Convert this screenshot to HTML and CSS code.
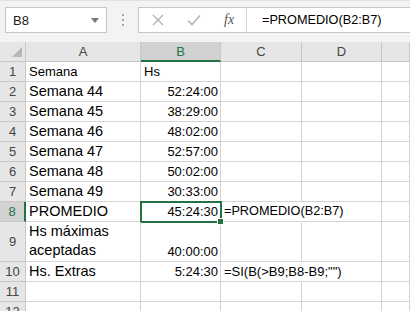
FILE: index.html
```html
<!DOCTYPE html>
<html lang="es">
<head>
  <meta charset="UTF-8" />
  <title>Libro1 - Excel</title>
  <link rel="stylesheet" href="styles.css">
</head>
<body>

  <div class="toolbar">
    <div class="namebox">
      <span>B8</span>
      <svg class="arrow" width="8" height="5" viewBox="0 0 8 5"><path d="M0 0H8L4 5Z" fill="#777"/></svg>
    </div>
    <div class="grip"><i></i><i></i><i></i></div>
    <div class="formula">
      <div class="fbtns">
        <svg width="12" height="12" viewBox="0 0 12 12"><path d="M1 1L11 11M11 1L1 11" stroke="#b4b4b4" stroke-width="1.4" fill="none"/></svg>
        <svg width="14" height="12" viewBox="0 0 14 12"><path d="M1 6.5L5 10.5L13 1.5" stroke="#b4b4b4" stroke-width="1.6" fill="none"/></svg>
        <span class="fx">fx</span>
      </div>
      <div class="finput">=PROMEDIO(B2:B7)</div>
    </div>
  </div>

  <div class="sheet">
    <div class="c hd corner"><svg width="10" height="10" viewBox="0 0 10 10"><path d="M10 0V10H0Z" fill="#b8b8b8"/></svg></div>
    <div class="c hd">A</div>
    <div class="c hd colsel">B</div>
    <div class="c hd">C</div>
    <div class="c hd">D</div>
    <div class="c hd"></div>

    <div class="c rh">1</div>
    <div class="c small">Semana</div>
    <div class="c small">Hs</div>
    <div class="c"></div><div class="c"></div><div class="c"></div>

    <div class="c rh">2</div>
    <div class="c">Semana 44</div>
    <div class="c num">52:24:00</div>
    <div class="c"></div><div class="c"></div><div class="c"></div>

    <div class="c rh">3</div>
    <div class="c">Semana 45</div>
    <div class="c num">38:29:00</div>
    <div class="c"></div><div class="c"></div><div class="c"></div>

    <div class="c rh">4</div>
    <div class="c">Semana 46</div>
    <div class="c num">48:02:00</div>
    <div class="c"></div><div class="c"></div><div class="c"></div>

    <div class="c rh">5</div>
    <div class="c">Semana 47</div>
    <div class="c num">52:57:00</div>
    <div class="c"></div><div class="c"></div><div class="c"></div>

    <div class="c rh">6</div>
    <div class="c">Semana 48</div>
    <div class="c num">50:02:00</div>
    <div class="c"></div><div class="c"></div><div class="c"></div>

    <div class="c rh">7</div>
    <div class="c">Semana 49</div>
    <div class="c num">30:33:00</div>
    <div class="c"></div><div class="c"></div><div class="c"></div>

    <div class="c rh rowsel">8</div>
    <div class="c">PROMEDIO</div>
    <div class="c num active">45:24:30<span class="handle"></span></div>
    <div class="c spill formula-text">=PROMEDIO(B2:B7)</div>
    <div class="c"></div><div class="c"></div>

    <div class="c rh">9</div>
    <div class="c wrap">Hs máximas<br>aceptadas</div>
    <div class="c num">40:00:00</div>
    <div class="c"></div><div class="c"></div><div class="c"></div>

    <div class="c rh">10</div>
    <div class="c">Hs. Extras</div>
    <div class="c num">5:24:30</div>
    <div class="c spill small">=SI(B(&gt;B9;B8-B9;"")</div>
    <div class="c"></div><div class="c"></div>

    <div class="c rh">11</div>
    <div class="c"></div><div class="c"></div><div class="c"></div><div class="c"></div><div class="c"></div>

    <div class="c rh">12</div>
    <div class="c"></div><div class="c"></div><div class="c"></div><div class="c"></div><div class="c"></div>
  </div>

</body>
</html>
```

FILE: styles.css
```css
* { box-sizing: border-box; }
body {
  margin: 0;
  font-family: "Liberation Sans", Arial, sans-serif;
  background: #fff;
  overflow: hidden;
}
.toolbar {
  height: 42px;
  background: #f3f3f3;
  border-top: 1px solid #e2e2e2;
  display: flex;
  padding-top: 6px;
}
.namebox {
  width: 102px;
  height: 26px;
  margin-left: 5px;
  background: #fff;
  border: 1px solid #c6c6c6;
  display: flex;
  align-items: center;
  justify-content: space-between;
  padding: 0 7px 0 7px;
  font-size: 13px;
  color: #222;
}
.grip {
  width: 31px;
  display: flex;
  flex-direction: column;
  align-items: center;
  justify-content: center;
  gap: 3px;
  height: 26px;
}
.grip i {
  width: 2px;
  height: 2px;
  background: #a8a8a8;
}
.formula {
  flex: 1;
  margin-right: -10px;
  height: 26px;
  background: #fff;
  border: 1px solid #c6c6c6;
  display: flex;
}
.fbtns {
  width: 108px;
  display: flex;
  align-items: center;
  padding-left: 13px;
  gap: 23px;
  border-right: 1px solid #d4d4d4;
}
.fx {
  font-family: "Liberation Serif", serif;
  font-style: italic;
  font-size: 14px;
  color: #555;
}
.finput {
  padding-left: 15px;
  display: flex;
  align-items: center;
  font-size: 12.7px;
  color: #000;
  white-space: nowrap;
}
.sheet {
  display: grid;
  grid-template-columns: 26px 115px 80px 81px 80px 28px;
  grid-template-rows: repeat(9, 20px) 40px repeat(3, 20px);
}
.c {
  border-right: 1px solid #d4d4d4;
  border-bottom: 1px solid #d4d4d4;
  display: flex;
  align-items: flex-end;
  padding: 0 2px 1px 3px;
  white-space: nowrap;
  font-size: 14.5px;
  line-height: 17px;
  color: #000;
  position: relative;
}
.hd, .rh {
  background: #e6e6e6;
  border-color: #c8c8c8;
  justify-content: center;
  align-items: center;
  font-size: 13px;
  color: #444;
  padding: 0;
}
.corner {
  justify-content: flex-end;
  align-items: flex-end;
  padding: 0 3px 4px 0;
}
.colsel {
  background: #d2d2d2;
  color: #217346;
  border-bottom: 2px solid #217346;
}
.rowsel {
  background: #d2d2d2;
  color: #217346;
  border-right: 2px solid #217346;
}
.small { font-size: 13px; }
.num {
  justify-content: flex-end;
  font-size: 13px;
}
.formula-text { font-size: 12.7px; }
.spill { border-right-color: transparent; }
.wrap {
  white-space: normal;
  line-height: 19px;
}
.active::after {
  content: "";
  position: absolute;
  top: -1px;
  left: -1px;
  right: -2px;
  bottom: -2px;
  border: 2px solid #217346;
}
.handle {
  position: absolute;
  right: -4px;
  bottom: -4px;
  width: 7px;
  height: 7px;
  background: #217346;
  border: 1px solid #fff;
  z-index: 2;
}
```
